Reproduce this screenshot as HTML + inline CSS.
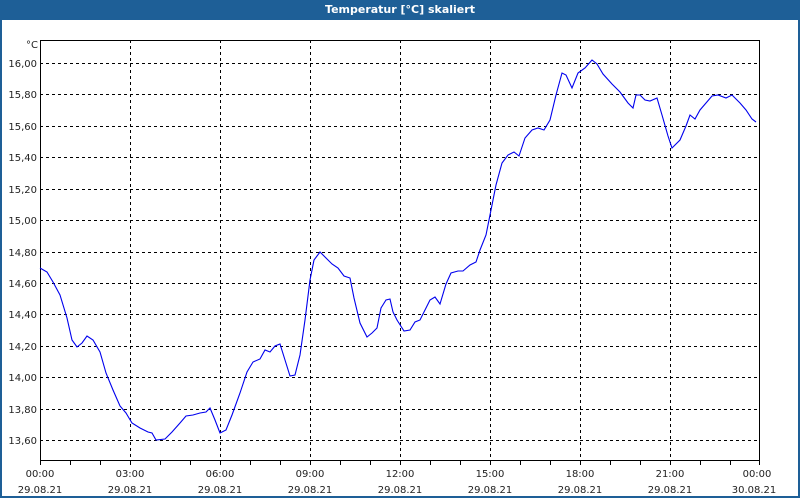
<!DOCTYPE html>
<html><head><style>
html,body{margin:0;padding:0;}
body{width:800px;height:500px;position:relative;background:#fff;overflow:hidden;font-family:"DejaVu Sans","Liberation Sans",sans-serif;}
.bar{position:absolute;left:0;top:0;width:800px;height:20px;background:#1e5f97;color:#fff;font-size:11px;font-weight:bold;text-align:center;line-height:19px;}
.frame{position:absolute;left:0;top:20px;width:796px;height:476px;border:2px solid #1e5f97;border-top:0;}
svg{position:absolute;left:0;top:0;}
svg text{font-family:"DejaVu Sans","Liberation Sans",sans-serif;font-size:10px;fill:#222;}
</style></head><body>
<div class="bar">Temperatur [°C] skaliert</div>
<div class="frame"></div>
<svg width="800" height="500">
<g stroke="#000" stroke-width="1" stroke-dasharray="3,3" fill="none" shape-rendering="crispEdges">
<line x1="130.5" y1="40" x2="130.5" y2="461"/><line x1="220.5" y1="40" x2="220.5" y2="461"/>
<line x1="310.5" y1="40" x2="310.5" y2="461"/><line x1="400.5" y1="40" x2="400.5" y2="461"/>
<line x1="490.5" y1="40" x2="490.5" y2="461"/><line x1="580.5" y1="40" x2="580.5" y2="461"/>
<line x1="670.5" y1="40" x2="670.5" y2="461"/>
<line x1="40" y1="63.5" x2="760" y2="63.5"/><line x1="40" y1="94.5" x2="760" y2="94.5"/>
<line x1="40" y1="126.5" x2="760" y2="126.5"/><line x1="40" y1="157.5" x2="760" y2="157.5"/>
<line x1="40" y1="189.5" x2="760" y2="189.5"/><line x1="40" y1="220.5" x2="760" y2="220.5"/>
<line x1="40" y1="252.5" x2="760" y2="252.5"/><line x1="40" y1="283.5" x2="760" y2="283.5"/>
<line x1="40" y1="314.5" x2="760" y2="314.5"/><line x1="40" y1="346.5" x2="760" y2="346.5"/>
<line x1="40" y1="377.5" x2="760" y2="377.5"/><line x1="40" y1="409.5" x2="760" y2="409.5"/>
<line x1="40" y1="440.5" x2="760" y2="440.5"/>
</g>
<g stroke="#000" stroke-width="1" fill="none" shape-rendering="crispEdges">
<rect x="40.5" y="40.5" width="719" height="420"/>
<path d="M40.5 461v4M70.5 461v4M100.5 461v4M130.5 461v4M160.5 461v4M190.5 461v4M220.5 461v4M250.5 461v4M280.5 461v4M310.5 461v4M340.5 461v4M370.5 461v4M400.5 461v4M430.5 461v4M460.5 461v4M490.5 461v4M520.5 461v4M550.5 461v4M580.5 461v4M610.5 461v4M640.5 461v4M670.5 461v4M700.5 461v4M730.5 461v4M759.5 461v4"/>
</g>
<polyline fill="none" stroke="#0000ee" stroke-width="1.1" points="40,268 47,272 53,282 60,295 67,318 72,340 77,347 82,343 87,336 93,340 100,352 106,373 113,390 120,406 126,413 132,423 140,428 148,432 152,433 156,440 165,439 172,432 180,423 186,416 193,415 200,413 206,412 210,408 215,420 220,433 226,430 232,415 240,393 247,372 253,362 260,359 265,350 270,352 275,346 280,344 285,360 290,376 295,375 300,355 305,320 310,280 314,260 320,252 326,258 332,264 338,268 344,276 350,278 354,298 360,323 367,337 372,333 377,328 381,308 386,300 390,299 393,312 397,320 404,331 410,330 415,322 420,320 425,310 430,300 435,297 440,304 446,284 451,273 458,271 463,271 470,265 476,262 480,250 486,235 490,215 496,185 502,163 508,155 514,152 519,156 525,138 532,130 538,128 544,130 550,120 556,95 562,73 566,75 572,88 578,73 585,68 592,60 597,64 603,74 612,84 620,92 628,103 633,108 636,95 640,95 645,100 650,101 657,98 662,115 668,136 672,148 680,140 686,126 690,115 695,119 700,110 706,103 712,96 718,95 726,98 732,95 740,103 746,110 752,119 756,122"/>
<g text-anchor="end">
<text x="38" y="48">°C</text>
<text x="37" y="67">16,00</text><text x="37" y="98">15,80</text><text x="37" y="130">15,60</text>
<text x="37" y="161">15,40</text><text x="37" y="193">15,20</text><text x="37" y="224">15,00</text>
<text x="37" y="256">14,80</text><text x="37" y="287">14,60</text><text x="37" y="318">14,40</text>
<text x="37" y="350">14,20</text><text x="37" y="381">14,00</text><text x="37" y="413">13,80</text>
<text x="37" y="444">13,60</text>
</g>
<g text-anchor="middle">
<text x="40" y="477">00:00</text><text x="40" y="493">29.08.21</text>
<text x="130" y="477">03:00</text><text x="130" y="493">29.08.21</text>
<text x="220" y="477">06:00</text><text x="220" y="493">29.08.21</text>
<text x="310" y="477">09:00</text><text x="310" y="493">29.08.21</text>
<text x="400" y="477">12:00</text><text x="400" y="493">29.08.21</text>
<text x="490" y="477">15:00</text><text x="490" y="493">29.08.21</text>
<text x="580" y="477">18:00</text><text x="580" y="493">29.08.21</text>
<text x="670" y="477">21:00</text><text x="670" y="493">29.08.21</text>
<text x="757" y="477">00:00</text><text x="754" y="493">30.08.21</text>
</g>
</svg>
</body></html>
